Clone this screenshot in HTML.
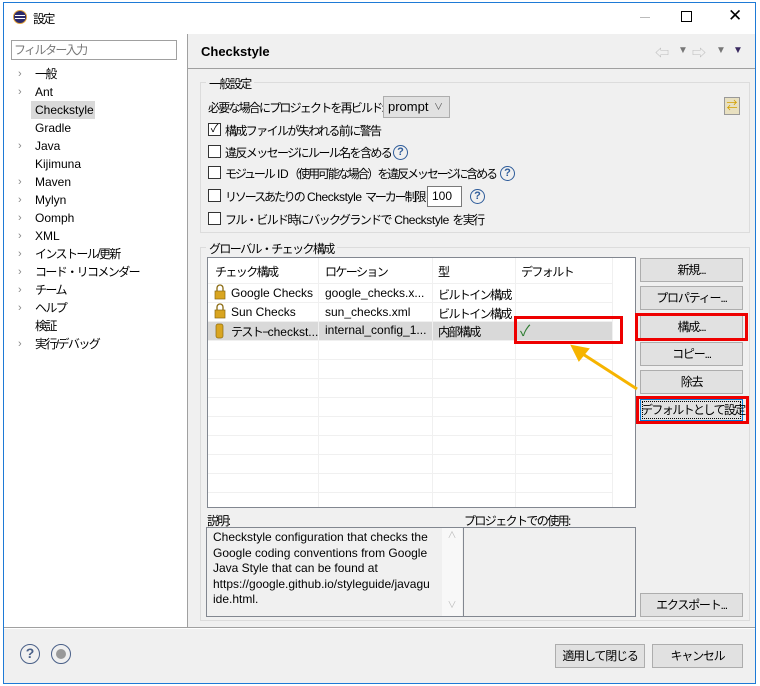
<!DOCTYPE html>
<html><head><meta charset="utf-8"><style>
*{box-sizing:border-box;margin:0;padding:0}
body{width:760px;height:686px;background:#fff;position:relative;overflow:hidden;font-family:"Liberation Sans","Noto Sans CJK JP",sans-serif;font-size:12px;color:#000}
.a{position:absolute;white-space:nowrap}
.j{letter-spacing:-1.6px}
.k{letter-spacing:-2.1px}
.l{letter-spacing:-0.4px}
.btn{position:absolute;background:#e1e1e1;border:1px solid #adadad;text-align:center;line-height:22px;font-size:12px;white-space:nowrap;letter-spacing:-1.2px}
.cb{position:absolute;width:13px;height:13px;border:1px solid #333;background:#fff}
.q{position:absolute;width:15px;height:15px;border:1.5px solid #2e5c9a;border-radius:50%;color:#2e5c9a;font-weight:bold;font-size:11px;text-align:center;line-height:12px}
.gb{position:absolute;border:1px solid #dcdcdc}
.arr{position:absolute;color:#777;font-size:10px}
.red{position:absolute;border:3px solid #e00}
</style></head><body>
<div class="a" style="left:3px;top:2px;width:753px;height:682px;border:1px solid #1e7ad6;background:#f0f0f0"></div>
<div class="a" style="left:4px;top:3px;width:751px;height:31px;background:#fff"></div>
<div class="a" style="left:13px;top:10px;width:14px;height:14px;border-radius:50%;background:#2c2a6b;border:1px solid #e3a23a"></div>
<div class="a" style="left:15px;top:15px;width:10px;height:1px;background:#fff"></div>
<div class="a" style="left:15px;top:18px;width:10px;height:1px;background:#fff"></div>
<div class="a j" style="left:33px;top:10px;font-size:12px">設定</div>
<div class="a" style="left:640px;top:17px;width:10px;height:1px;background:#bbb"></div>
<div class="a" style="left:681px;top:11px;width:11px;height:11px;border:1px solid #000"></div>
<div class="a" style="left:728px;top:6px;font-size:17px;font-weight:300">✕</div>
<!-- left panel -->
<div class="a" style="left:4px;top:34px;width:183px;height:594px;background:#fff"></div>
<div class="a" style="left:187px;top:34px;width:1px;height:594px;background:#a0a0a0"></div>
<div class="a j" style="left:11px;top:40px;width:166px;height:20px;border:1px solid #a0a0a0;background:#fff;color:#777;padding-left:2px;line-height:18px">フィルター入力</div>
<div class="a" style="left:31px;top:101px;width:64px;height:18px;background:#d9d9d9"></div>
<div class="a" style="left:18px;top:65px;line-height:18px;color:#888;font-size:11px">
›<br>›<br><br><br>›<br><br>›<br>›<br>›<br>›<br>›<br>›<br>›<br>›<br><br>›</div>
<div class="a" style="left:35px;top:65px;line-height:18px;font-size:12px"><span class="j">一般</span><br>Ant<br>Checkstyle<br>Gradle<br>Java<br>Kijimuna<br>Maven<br>Mylyn<br>Oomph<br>XML<br><span class="j">インストール/更新</span><br><span class="j">コード・リコメンダー</span><br><span class="j">チーム</span><br><span class="j">ヘルプ</span><br><span class="j">検証</span><br><span class="j">実行/デバッグ</span></div>
<!-- right header -->
<div class="a" style="left:201px;top:44px;font-weight:bold;font-size:13px">Checkstyle</div>
<div class="a" style="left:188px;top:68px;width:567px;height:1px;background:#a0a0a0"></div>
<div class="arr" style="left:655px;top:43px;font-size:14px;color:#bbb">⇦</div>
<div class="arr" style="left:678px;top:45px">▼</div>
<div class="arr" style="left:692px;top:43px;font-size:14px;color:#bbb">⇨</div>
<div class="arr" style="left:716px;top:45px">▼</div>
<div class="arr" style="left:733px;top:45px;color:#3a2a60">▼</div>
<!-- group 1 -->
<div class="gb" style="left:200px;top:82px;width:550px;height:151px"></div>
<div class="a j" style="left:206px;top:75px;background:#f0f0f0;padding:0 3px">一般設定</div>
<div class="a" style="left:208px;top:99px;letter-spacing:-1.8px">必要な場合にプロジェクトを再ビルド:</div>
<div class="a" style="left:383px;top:96px;width:67px;height:22px;border:1px solid #adadad;background:#e1e1e1;padding-left:4px;line-height:20px;font-size:13px">prompt<span style="position:absolute;right:6px;font-size:9px;color:#555">∨</span></div>
<div class="a" style="left:724px;top:97px;width:16px;height:18px;border:1px solid #999;background:#e8e0c0;color:#d4a000;font-size:11px;text-align:center;line-height:16px">⇄</div>
<div class="cb" style="left:208px;top:123px;font-size:11px;line-height:11px;text-align:center">✓</div>
<div class="a j" style="left:225px;top:122px">構成ファイルが失われる前に警告</div>
<div class="cb" style="left:208px;top:145px"></div>
<div class="a j" style="left:225px;top:144px">違反メッセージにルール名を含める</div>
<div class="q" style="left:393px;top:145px">?</div>
<div class="cb" style="left:208px;top:166px"></div>
<div class="a" style="left:225px;top:165px"><span class="k">モジュール</span> <span class="l">ID</span><span class="k">（使用可能な場合）を違反メッセージに含める</span></div>
<div class="q" style="left:500px;top:166px">?</div>
<div class="cb" style="left:208px;top:189px"></div>
<div class="a" style="left:225px;top:188px"><span class="k">リソースあたりの</span> <span class="l">Checkstyle</span> <span class="k">マーカー制限</span></div>
<div class="a" style="left:427px;top:186px;width:35px;height:21px;border:1px solid #7a7a7a;background:#fff;padding-left:4px;line-height:19px">100</div>
<div class="q" style="left:470px;top:189px">?</div>
<div class="cb" style="left:208px;top:212px"></div>
<div class="a" style="left:225px;top:211px"><span class="j">フル・ビルド時にバックグランドで</span> <span class="l">Checkstyle</span> <span class="j">を実行</span></div>
<!-- group 2 -->
<div class="gb" style="left:200px;top:247px;width:550px;height:374px"></div>
<div class="a j" style="left:206px;top:240px;background:#f0f0f0;padding:0 3px">グローバル・チェック構成</div>
<div class="a" style="left:207px;top:257px;width:429px;height:251px;border:1px solid #828790;background:#fff;overflow:hidden">
<svg width="429" height="251" style="position:absolute;left:0;top:0">
<rect x="0" y="63" width="405" height="19" fill="#d9d9d9"/>
<g stroke="#f0f0f0"><line x1="110.5" y1="0" x2="110.5" y2="251"/><line x1="224.5" y1="0" x2="224.5" y2="251"/><line x1="307.5" y1="0" x2="307.5" y2="251"/><line x1="404.5" y1="0" x2="404.5" y2="251"/>
<line x1="0" y1="25.5" x2="405" y2="25.5"/><line x1="0" y1="44.5" x2="405" y2="44.5"/><line x1="0" y1="63.5" x2="405" y2="63.5"/><line x1="0" y1="82.5" x2="405" y2="82.5"/><line x1="0" y1="101.5" x2="405" y2="101.5"/><line x1="0" y1="120.5" x2="405" y2="120.5"/><line x1="0" y1="139.5" x2="405" y2="139.5"/><line x1="0" y1="158.5" x2="405" y2="158.5"/><line x1="0" y1="177.5" x2="405" y2="177.5"/><line x1="0" y1="196.5" x2="405" y2="196.5"/><line x1="0" y1="215.5" x2="405" y2="215.5"/><line x1="0" y1="234.5" x2="405" y2="234.5"/></g>
<g fill="#d9a520" stroke="#8a6a10" stroke-width="0.7"><rect x="7" y="33" width="10" height="8"/><rect x="7" y="52" width="10" height="8"/><rect x="8" y="66" width="7" height="14" rx="2"/></g>
<g fill="none" stroke="#8a6a10" stroke-width="1.3"><path d="M9 33v-3a3 3 0 0 1 6 0v3"/><path d="M9 52v-3a3 3 0 0 1 6 0v3"/></g>
</svg>
<div class="a j" style="left:7px;top:5px">チェック構成</div>
<div class="a j" style="left:117px;top:5px">ロケーション</div>
<div class="a" style="left:230px;top:5px">型</div>
<div class="a j" style="left:313px;top:5px">デフォルト</div>
<div class="a" style="left:23px;top:28px">Google Checks</div>
<div class="a" style="left:117px;top:28px">google_checks.x...</div>
<div class="a j" style="left:230px;top:28px">ビルトイン構成</div>
<div class="a" style="left:23px;top:47px">Sun Checks</div>
<div class="a" style="left:117px;top:47px">sun_checks.xml</div>
<div class="a j" style="left:230px;top:47px">ビルトイン構成</div>
<div class="a" style="left:23px;top:65px"><span class="j">テスト−</span>checkst...</div>
<div class="a" style="left:117px;top:65px">internal_config_1...</div>
<div class="a j" style="left:230px;top:65px">内部構成</div>
<div class="a" style="left:312px;top:62px;color:#2e7d32;font-size:15px">✓</div>
</div>
<div class="red" style="left:514px;top:316px;width:109px;height:28px"></div>
<div class="btn" style="left:640px;top:258px;width:103px;height:24px">新規...</div>
<div class="btn" style="left:640px;top:286px;width:103px;height:24px">プロパティー...</div>
<div class="btn" style="left:640px;top:315px;width:103px;height:24px">構成...</div>
<div class="red" style="left:635px;top:313px;width:113px;height:28px"></div>
<div class="btn" style="left:640px;top:342px;width:103px;height:24px">コピー...</div>
<div class="btn" style="left:640px;top:370px;width:103px;height:24px">除去</div>
<div class="btn" style="left:640px;top:399px;width:103px;height:22px;border:1px solid #0078d7;line-height:20px;outline:1px dotted #000;outline-offset:-3px;letter-spacing:-1.6px">デフォルトとして設定</div>
<div class="red" style="left:636px;top:396px;width:113px;height:28px"></div>
<svg class="a" style="left:560px;top:335px" width="85" height="60"><path d="M77 54L15 14" stroke="#f6b400" stroke-width="3" fill="none"/><path d="M12 11L28 14L19 25Z" fill="#f6b400" stroke="#f6b400" stroke-width="2"/></svg>
<!-- description -->
<div class="a j" style="left:207px;top:512px">説明:</div>
<div class="a j" style="left:464px;top:512px">プロジェクトでの使用:</div>
<div class="a" style="left:206px;top:527px;width:258px;height:90px;border:1px solid #828790;background:#f0f0f0"></div>
<div class="a" style="left:442px;top:528px;width:20px;height:88px;background:#f8f8f8;color:#bbb;font-size:9px;text-align:center;line-height:14px">∧<br><br><br><br><br>∨</div>
<div class="a" style="left:213px;top:530px;line-height:15.5px;white-space:normal;width:230px;font-size:12px">Checkstyle configuration that checks the Google coding conventions from Google Java Style that can be found at https://google.github.io/styleguide/javagu ide.html.</div>
<div class="a" style="left:463px;top:527px;width:173px;height:90px;border:1px solid #828790;background:#f0f0f0"></div>
<div class="btn" style="left:640px;top:593px;width:103px;height:24px">エクスポート...</div>
<!-- bottom -->
<div class="a" style="left:4px;top:627px;width:751px;height:1px;background:#a0a0a0"></div>
<div class="a" style="left:4px;top:628px;width:751px;height:1px;background:#fff"></div>
<div class="q" style="left:20px;top:644px;width:20px;height:20px;font-size:14px;line-height:17px;border-color:#4a6088;color:#4a6088">?</div>
<div class="a" style="left:51px;top:644px;width:20px;height:20px;border:1.5px solid #4a6088;border-radius:50%"></div>
<div class="a" style="left:56px;top:649px;width:10px;height:10px;border-radius:50%;background:#999"></div>
<div class="btn" style="left:555px;top:644px;width:90px;height:24px">適用して閉じる</div>
<div class="btn" style="left:652px;top:644px;width:91px;height:24px">キャンセル</div>
</body></html>
